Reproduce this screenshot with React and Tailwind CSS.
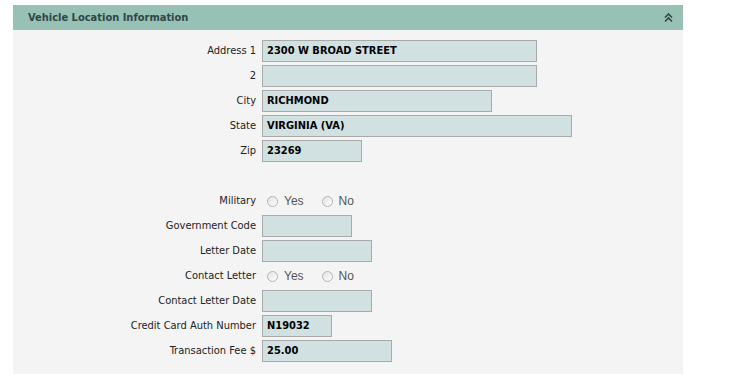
import React from 'react';

const font = 'font-["DejaVu_Sans_Condensed","DejaVu_Sans",sans-serif]';

// text field row: label on the left, filled box on the right
const Field = ({ label, value, width }) => (
    <div className="flex items-center h-[25px]">
        <label className="w-[249px] pr-[6px] pt-[2px] text-right text-[11px] text-[#222]">{label}</label>
        <div
            className={`h-[22px] border border-[#a9a9a9] bg-[#d1e0e0] px-[4px] pt-[2px] flex items-center text-[11px] font-bold text-black ${width}`}
        >
            {value}
        </div>
    </div>
);

const Radio = ({ text }) => (
    <span className="flex items-center">
        <span className="w-[11px] h-[11px] rounded-full border border-[#b4b4b4] bg-gradient-to-br from-[#e2e2e2] to-white" />
        <span className='ml-[6px] text-[12px] text-[#555] font-["Liberation_Sans",Arial,sans-serif]'>{text}</span>
    </span>
);

const RadioRow = ({ label }) => (
    <div className="flex items-center h-[25px]">
        <label className="w-[249px] pr-[6px] pt-[1px] text-right text-[11px] text-[#222]">{label}</label>
        <div className="flex items-center gap-[18px] pl-[5px] pt-[1px]">
            <Radio text="Yes" />
            <Radio text="No" />
        </div>
    </div>
);

export default function App() {
    return (
        <div className={`w-[753px] h-[387px] bg-white pt-[5px] pl-[13px] ${font}`}>
            <div className="w-[670px]">
                {/* header bar */}
                <div className="h-[25px] bg-[#97c1b5] flex items-center justify-between pl-[15px] pr-[10px]">
                    <span className="pt-[2px] text-[11px] font-bold text-[#2d4747]">Vehicle Location Information</span>
                    <svg width="9" height="10" viewBox="0 0 9 10" className="text-[#2d4747]">
                        <path d="M1 4.5 L4.5 1 L8 4.5 M1 8.5 L4.5 5 L8 8.5" fill="none" stroke="currentColor" strokeWidth="1.6" />
                    </svg>
                </div>

                {/* form body */}
                <div className="bg-[#f4f4f4] pt-[8px] pb-[11px]">
                    <Field label="Address 1" value="2300 W BROAD STREET" width="w-[275px]" />
                    <Field label="2" value="" width="w-[275px]" />
                    <Field label="City" value="RICHMOND" width="w-[230px]" />
                    <Field label="State" value="VIRGINIA (VA)" width="w-[310px]" />
                    <Field label="Zip" value="23269" width="w-[100px]" />
                    <div className="h-[25px]" />
                    <RadioRow label="Military" />
                    <Field label="Government Code" value="" width="w-[90px]" />
                    <Field label="Letter Date" value="" width="w-[110px]" />
                    <RadioRow label="Contact Letter" />
                    <Field label="Contact Letter Date" value="" width="w-[110px]" />
                    <Field label="Credit Card Auth Number" value="N19032" width="w-[70px]" />
                    <Field label="Transaction Fee $" value="25.00" width="w-[130px]" />
                </div>
            </div>
        </div>
    );
}
